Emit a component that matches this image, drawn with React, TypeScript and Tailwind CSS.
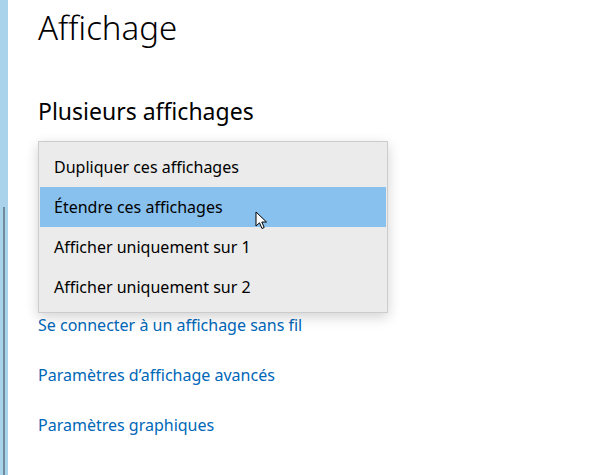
import React from "react";

const options = [
  "Dupliquer ces affichages",
  "Étendre ces affichages",
  "Afficher uniquement sur 1",
  "Afficher uniquement sur 2",
];

const links = [
  "Se connecter à un affichage sans fil",
  "Paramètres d’affichage avancés",
  "Paramètres graphiques",
];

function Cursor() {
  return (
    <svg width="13" height="20" viewBox="0 0 13 20" className="absolute left-[255px] top-[211px]">
      <path d="M1 1 L1 15 L4.5 11.8 L7 17.5 L9.2 16.5 L6.8 11 L11.5 11 Z" fill="#fff" stroke="#000" strokeWidth="1" strokeLinejoin="round" />
    </svg>
  );
}

export default function App() {
  const selected = 1;
  return (
    <div className="relative flex h-[475px] w-[600px] overflow-hidden bg-white font-['Noto_Sans','Open_Sans',sans-serif]">
      <div className="flex w-[8px] flex-col bg-[#a9d3ea]">
        <div className="ml-[3px] mt-[207px] w-[2px] flex-1 bg-[#6f8b9b]" />
      </div>

      <div className="relative flex-1 pl-[30px]">
        <h1 className="mt-[9px] text-[33px] font-light leading-[38px] text-black">Affichage</h1>
        <h2 className="mt-[49px] text-[23px] leading-[30px] text-black">Plusieurs affichages</h2>

        <div className="mt-[14px] h-[172px]" />

        <div className="flex flex-col gap-[24px]">
          {links.map((l) => (
            <a key={l} className="text-[16px] leading-[26px] text-[#0067b8]">
              {l}
            </a>
          ))}
        </div>

        <div className="absolute left-[30px] top-[141px] w-[350px] border border-[#cccccc] bg-[#ebebeb] py-[5px] shadow-[0_4px_12px_rgba(0,0,0,0.18)]">
          {options.map((o, i) => (
            <div
              key={o}
              className={`mx-[1px] flex h-[40px] items-center px-[14px] text-[16px] text-black ${
                i === selected ? "bg-[#88c0ee]" : ""
              }`}
            >
              {o}
            </div>
          ))}
        </div>
      </div>
      <Cursor />
    </div>
  );
}
